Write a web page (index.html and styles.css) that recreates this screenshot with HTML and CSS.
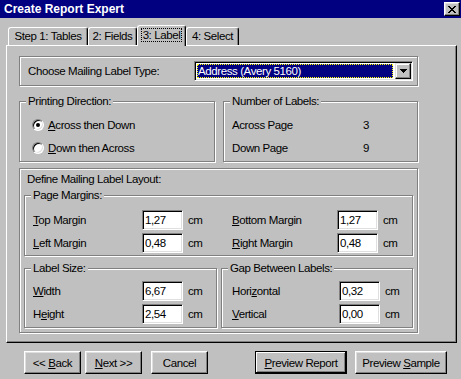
FILE: index.html
```html
<!DOCTYPE html>
<html lang="en">

<head>
    <meta charset="UTF-8">
    <title>Create Report Expert</title>
    <link rel="stylesheet" href="styles.css">
</head>

<body>
    <div class="dialog">
        <div class="titlebar">
            <span class="title">Create Report Expert</span>
            <span class="close">
                <svg width="8" height="7" viewBox="0 0 8 7" shape-rendering="crispEdges">
                    <path fill="#000" d="M0 0h2v1H0z M6 0h2v1H6z M1 1h2v1H1z M5 1h2v1H5z M2 2h4v1H2z M3 3h2v1H3z M2 4h4v1H2z M1 5h2v1H1z M5 5h2v1H5z M0 6h2v1H0z M6 6h2v1H6z"/>
                </svg>
            </span>
        </div>

        <div class="tabs">
            <div class="tab tab-1">Step 1: Tables</div>
            <div class="tab tab-2">2: Fields</div>
            <div class="tab tab-3 active"><span class="focus">3: Label</span></div>
            <div class="tab tab-4">4: Select</div>
        </div>

        <div class="panel">
            <div class="etched choose">
                <span>Choose Mailing Label Type:</span>
                <div class="combo">
                    <span class="combo-value">Address (Avery 5160)</span>
                    <span class="combo-btn">
                        <svg width="7" height="4" viewBox="0 0 7 4" shape-rendering="crispEdges">
                            <path fill="#000" d="M0 0h7v1H0z M1 1h5v1H1z M2 2h3v1H2z M3 3h1v1H3z"/>
                        </svg>
                    </span>
                </div>
            </div>

            <div class="row2">
                <div class="etched group direction">
                    <span class="group-title">Printing Direction:</span>
                    <div class="radio-row"><span class="radio checked"></span><span><u>A</u>cross then Down</span></div>
                    <div class="radio-row"><span class="radio"></span><span><u>D</u>own then Across</span></div>
                </div>
                <div class="etched group count">
                    <span class="group-title">Number of Labels:</span>
                    <div class="count-row"><span class="count-label">Across Page</span><span>3</span></div>
                    <div class="count-row"><span class="count-label">Down Page</span><span>9</span></div>
                </div>
            </div>

            <div class="etched layout">
                <div class="layout-title">Define Mailing Label Layout:</div>

                <div class="etched group margins">
                    <span class="group-title">Page Margins:</span>
                    <div class="fields margin-fields">
                        <span><u>T</u>op Margin</span>
                        <input class="field" type="text" value="1,27">
                        <span class="unit">cm</span>
                        <span><u>B</u>ottom Margin</span>
                        <input class="field" type="text" value="1,27">
                        <span class="unit">cm</span>

                        <span><u>L</u>eft Margin</span>
                        <input class="field" type="text" value="0,48">
                        <span class="unit">cm</span>
                        <span><u>R</u>ight Margin</span>
                        <input class="field" type="text" value="0,48">
                        <span class="unit">cm</span>
                    </div>
                </div>

                <div class="layout-row">
                    <div class="etched group size">
                        <span class="group-title">Label Size:</span>
                        <div class="fields size-fields">
                            <span><u>W</u>idth</span>
                            <input class="field" type="text" value="6,67">
                            <span class="unit">cm</span>
                            <span>H<u>e</u>ight</span>
                            <input class="field" type="text" value="2,54">
                            <span class="unit">cm</span>
                        </div>
                    </div>
                    <div class="etched group gap">
                        <span class="group-title">Gap Between Labels:</span>
                        <div class="fields gap-fields">
                            <span>Hori<u>z</u>ontal</span>
                            <input class="field" type="text" value="0,32">
                            <span class="unit">cm</span>
                            <span><u>V</u>ertical</span>
                            <input class="field" type="text" value="0,00">
                            <span class="unit">cm</span>
                        </div>
                    </div>
                </div>
            </div>
        </div>

        <div class="buttons">
            <button class="btn btn-back">&lt;&lt; <u>B</u>ack</button>
            <button class="btn btn-next"><u>N</u>ext &gt;&gt;</button>
            <button class="btn btn-cancel">Cancel</button>
            <button class="btn btn-wide btn-default"><u>P</u>review Report</button>
            <button class="btn btn-wide btn-sample">Preview <u>S</u>ample</button>
        </div>
    </div>
</body>

</html>
```
FILE: styles.css
```css
body {
    margin: 0;
    background: #c0c0c0;
    font-family: "Liberation Sans", Arial, sans-serif;
    font-size: 11.5px;
    letter-spacing: -0.4px;
    color: #000;
    white-space: nowrap;
}

.dialog {
    width: 461px;
    height: 379px;
    overflow: hidden;
    background: #c0c0c0;
}

/* title bar */
.titlebar {
    box-sizing: border-box;
    height: 18px;
    padding: 0 1px 0 4px;
    display: flex;
    align-items: center;
    justify-content: space-between;
    background: #000080;
}

.title {
    color: #fff;
    font-weight: bold;
    font-size: 12px;
    letter-spacing: 0;
}

.close {
    box-sizing: border-box;
    width: 16px;
    height: 14px;
    display: flex;
    align-items: center;
    justify-content: center;
    background: #c0c0c0;
    border: 1px solid;
    border-color: #fff #000 #000 #fff;
    box-shadow: inset -1px -1px #808080, inset 1px 1px #dfdfdf;
}

/* tabs */
.tabs {
    height: 21px;
    margin: 7px 0 -1px;
    padding-left: 8px;
    display: flex;
    align-items: flex-start;
}

.tab {
    box-sizing: border-box;
    height: 18px;
    margin-top: 2px;
    border: 1px solid;
    border-bottom: 0;
    border-color: #fff #000 #000 #fff;
    border-radius: 3px 3px 0 0;
    box-shadow: inset -1px 0 #808080;
    text-align: center;
    line-height: 16px;
}

.tab-1 { width: 80px; }
.tab-2 { width: 49px; }
.tab-3 { width: 49px; }
.tab-4 { width: 53px; }

.tab.active {
    position: relative;
    z-index: 1;
    height: 21px;
    margin-top: 0;
    padding-top: 1px;
    background: #c0c0c0;
}

.focus {
    outline: 1px dotted #000;
    outline-offset: 0;
    padding: 0 1px;
}

/* page */
.panel {
    box-sizing: border-box;
    width: 451px;
    height: 298px;
    margin-left: 6px;
    padding: 10px 0 0 12px;
    border: 1px solid;
    border-color: #fff #000 #000 #fff;
    box-shadow: inset -1px -1px #808080;
}

.etched {
    box-sizing: border-box;
    border: 1px solid #808080;
    box-shadow: inset 1px 1px #fff, 1px 1px #fff;
}

.choose {
    width: 399px;
    height: 30px;
    padding: 0 4px 0 8px;
    display: flex;
    align-items: center;
}

.combo {
    box-sizing: border-box;
    width: 219px;
    height: 20px;
    margin-left: auto;
    padding: 1px;
    display: flex;
    background: #fff;
    border: 1px solid;
    border-color: #808080 #fff #fff #808080;
    box-shadow: inset 1px 1px #000, inset -1px -1px #dfdfdf;
}

.combo-value {
    flex: 1;
    margin: 1px 2px 1px 1px;
    padding-left: 1px;
    line-height: 14px;
    color: #fff;
    background: #000080;
    outline: 1px dotted #ff0;
    outline-offset: -1px;
}

.combo-btn {
    box-sizing: border-box;
    width: 16px;
    height: 16px;
    display: flex;
    align-items: center;
    justify-content: center;
    background: #c0c0c0;
    border: 1px solid;
    border-color: #dfdfdf #000 #000 #dfdfdf;
    box-shadow: inset -1px -1px #808080, inset 1px 1px #fff;
}

/* group boxes */
.group {
    position: relative;
}

.group-title {
    position: absolute;
    top: -8px;
    left: 6px;
    padding: 0 2px;
    line-height: 14px;
    background: #c0c0c0;
}

.row2 {
    margin-top: 15px;
    width: 399px;
    display: grid;
    grid-template-columns: 196px 195px;
    column-gap: 8px;
}

.direction,
.count {
    height: 61px;
    padding-top: 11px;
}

.radio-row,
.count-row {
    height: 23px;
    display: flex;
    align-items: center;
}

.radio-row {
    padding-left: 12px;
    gap: 4px;
}

.radio {
    box-sizing: border-box;
    width: 12px;
    height: 12px;
    display: flex;
    align-items: center;
    justify-content: center;
    border-radius: 50%;
    background: #fff;
    border: 1px solid;
    border-color: #808080 #fff #fff #808080;
    box-shadow: inset 1px 1px #000, inset -1px -1px #dfdfdf;
}

.radio.checked::after {
    content: "";
    width: 4px;
    height: 4px;
    border-radius: 50%;
    background: #000;
}

.count-row {
    padding-left: 8px;
}

.count-label {
    width: 131px;
}

/* layout section */
.layout {
    width: 399px;
    height: 165px;
    margin-top: 6px;
    padding: 0 4px;
}

.layout-title {
    margin-top: 3px;
    padding-left: 3px;
    line-height: 14px;
}

.margins {
    height: 61px;
    margin-top: 9px;
    padding: 12px 0 0 8px;
}

.layout-row {
    margin-top: 12px;
    display: grid;
    grid-template-columns: 193px 192px;
    column-gap: 4px;
}

.size,
.gap {
    height: 60px;
    padding-top: 10px;
}

.size {
    padding-left: 8px;
}

.gap {
    padding-left: 10px;
}

.fields {
    display: grid;
    grid-auto-rows: 23px;
    align-items: center;
}

.margin-fields {
    grid-template-columns: 109px 41px 49px 105px 41px auto;
}

.size-fields {
    grid-template-columns: 109px 41px auto;
}

.gap-fields {
    grid-template-columns: 107px 41px auto;
}

.unit {
    padding-left: 5px;
}

.field {
    box-sizing: border-box;
    width: 41px;
    height: 20px;
    margin: 0;
    padding: 0 0 0 2px;
    font: inherit;
    letter-spacing: inherit;
    color: #000;
    background: #fff;
    border: 1px solid;
    border-color: #808080 #fff #fff #808080;
    box-shadow: inset 1px 1px #000, inset -1px -1px #dfdfdf;
    outline: none;
}

/* buttons */
.buttons {
    margin-top: 8px;
    padding-left: 24px;
    display: flex;
}

.btn {
    box-sizing: border-box;
    width: 57px;
    height: 23px;
    padding: 0;
    font: inherit;
    letter-spacing: inherit;
    color: #000;
    background: #c0c0c0;
    border: 1px solid;
    border-color: #fff #000 #000 #fff;
    box-shadow: inset -1px -1px #808080, inset 1px 1px #dfdfdf;
}

.btn-next { margin-left: 4px; }
.btn-cancel { margin-left: 9px; }
.btn-wide { width: 92px; }
.btn-default { margin-left: 47px; }
.btn-sample { margin-left: 8px; }

.btn-default {
    border-color: #000;
    box-shadow: inset -1px -1px #000, inset 1px 1px #fff, inset -2px -2px #808080;
}
```
